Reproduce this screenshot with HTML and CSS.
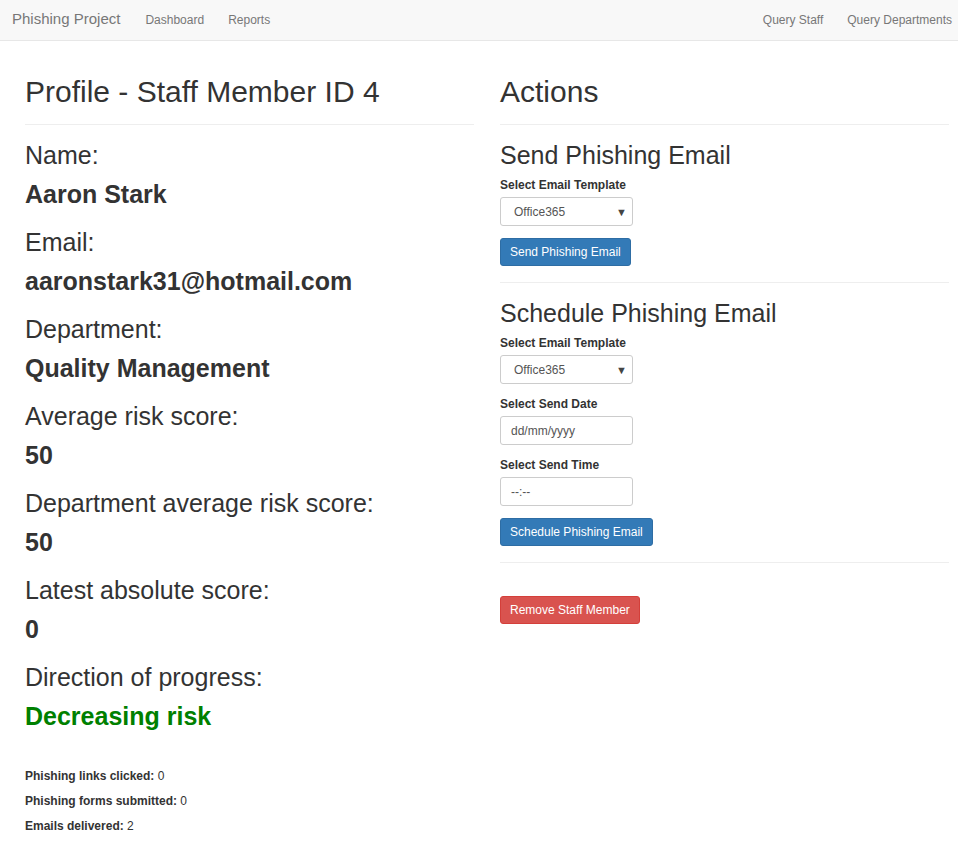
FILE: index.html
```html
<!DOCTYPE html>
<html lang="en">
<head>
<meta charset="utf-8">
<title>Profile - Staff Member ID 4</title>
<link rel="stylesheet" href="styles.css">
</head>
<body>
<nav class="navbar">
  <a class="brand" href="#">Phishing Project</a>
  <ul class="nav nav-left">
    <li><a href="#">Dashboard</a></li>
    <li><a href="#">Reports</a></li>
  </ul>
  <ul class="nav nav-right">
    <li><a href="#">Query Staff</a></li>
    <li><a href="#">Query Departments</a></li>
  </ul>
</nav>

<main class="page">
  <section class="col">
    <h2 class="page-title">Profile - Staff Member ID 4</h2>
    <hr class="rule">
    <div class="field-group">
      <h3 class="field-label">Name:</h3>
      <p class="field-value">Aaron Stark</p>
    </div>
    <div class="field-group">
      <h3 class="field-label">Email:</h3>
      <p class="field-value">aaronstark31@hotmail.com</p>
    </div>
    <div class="field-group">
      <h3 class="field-label">Department:</h3>
      <p class="field-value">Quality Management</p>
    </div>
    <div class="field-group">
      <h3 class="field-label">Average risk score:</h3>
      <p class="field-value">50</p>
    </div>
    <div class="field-group">
      <h3 class="field-label">Department average risk score:</h3>
      <p class="field-value">50</p>
    </div>
    <div class="field-group">
      <h3 class="field-label">Latest absolute score:</h3>
      <p class="field-value">0</p>
    </div>
    <div class="field-group">
      <h3 class="field-label">Direction of progress:</h3>
      <p class="field-value good">Decreasing risk</p>
    </div>
    <div class="stats">
      <p><b>Phishing links clicked:</b> 0</p>
      <p><b>Phishing forms submitted:</b> 0</p>
      <p><b>Emails delivered:</b> 2</p>
    </div>
  </section>

  <section class="col">
    <h2 class="page-title">Actions</h2>
    <hr class="rule">

    <h3 class="section-title">Send Phishing Email</h3>
    <div class="form-group">
      <label class="form-label">Select Email Template</label>
      <div class="select"><span>Office365</span><span class="caret">&#9660;</span></div>
    </div>
    <button class="btn btn-primary" type="button">Send Phishing Email</button>
    <hr class="rule">

    <h3 class="section-title">Schedule Phishing Email</h3>
    <div class="form-group">
      <label class="form-label">Select Email Template</label>
      <div class="select"><span>Office365</span><span class="caret">&#9660;</span></div>
    </div>
    <div class="form-group">
      <label class="form-label">Select Send Date</label>
      <div class="input">dd/mm/yyyy</div>
    </div>
    <div class="form-group">
      <label class="form-label">Select Send Time</label>
      <div class="input">--:--</div>
    </div>
    <button class="btn btn-primary" type="button">Schedule Phishing Email</button>
    <hr class="rule">

    <button class="btn btn-danger btn-remove" type="button">Remove Staff Member</button>
  </section>
</main>
</body>
</html>
```

FILE: styles.css
```css
* { box-sizing: border-box; }

html, body {
  margin: 0;
  padding: 0;
  background: #fff;
  color: #333;
  font-family: "Liberation Sans", Arial, sans-serif;
}

a { text-decoration: none; }

/* navbar */
.navbar {
  display: flex;
  align-items: center;
  height: 41px;
  background: #f8f8f8;
  border-bottom: 1px solid #e7e7e7;
  padding: 0 6px 3px 12px;
}
.brand {
  font-size: 15px;
  color: #777;
  margin-right: 25px;
}
.nav {
  display: flex;
  list-style: none;
  margin: 0;
  padding: 0;
  gap: 24px;
}
.nav a {
  font-size: 12px;
  color: #777;
}
.nav-right { margin-left: auto; }

/* main layout */
.page {
  display: grid;
  grid-template-columns: 449px 449px;
  column-gap: 26px;
  padding: 34px 9px 0 25px;
}
.col { display: flex; flex-direction: column; align-items: flex-start; }

.page-title {
  margin: 0;
  font-size: 30px;
  line-height: 33px;
  font-weight: normal;
}
.rule {
  align-self: stretch;
  border: 0;
  border-top: 1px solid #eee;
  height: 0;
  margin: 16px 0 17px;
}

.field-group { margin-bottom: 22px; }
.field-label {
  margin: 0;
  font-size: 25px;
  line-height: 26px;
  font-weight: normal;
}
.field-value {
  margin: 13px 0 0;
  font-size: 25px;
  line-height: 26px;
  font-weight: bold;
}
.field-value.good { color: #008000; }

.stats { margin-top: 13px; }
.stats p {
  margin: 0;
  font-size: 12px;
  line-height: 25px;
}

/* actions */
.section-title {
  margin: 0 0 9px;
  font-size: 25px;
  line-height: 26px;
  font-weight: normal;
}
.form-group {
  display: flex;
  flex-direction: column;
  align-items: flex-start;
  margin-bottom: 12px;
}
.form-label {
  font-size: 12px;
  line-height: 17px;
  font-weight: bold;
  margin-bottom: 3px;
}
.select, .input {
  width: 133px;
  height: 29px;
  border: 1px solid #ccc;
  border-radius: 3px;
  background: #fff;
  font-size: 12px;
  color: #555;
  display: flex;
  align-items: center;
}
.select {
  justify-content: space-between;
  padding: 0 5px 0 13px;
}
.caret {
  font-size: 11px;
  color: #444;
}
.input { padding: 0 10px; }

.btn {
  font-family: "Liberation Sans", Arial, sans-serif;
  font-size: 12px;
  line-height: 18px;
  height: 28px;
  padding: 4px 9px;
  border: 1px solid transparent;
  border-radius: 3px;
  color: #fff;
  cursor: pointer;
}
.btn-primary {
  background: #337ab7;
  border-color: #2e6da4;
}
.btn-danger {
  background: #d9534f;
  border-color: #d43f3a;
}
.btn-remove { margin-top: 16px; }
```
